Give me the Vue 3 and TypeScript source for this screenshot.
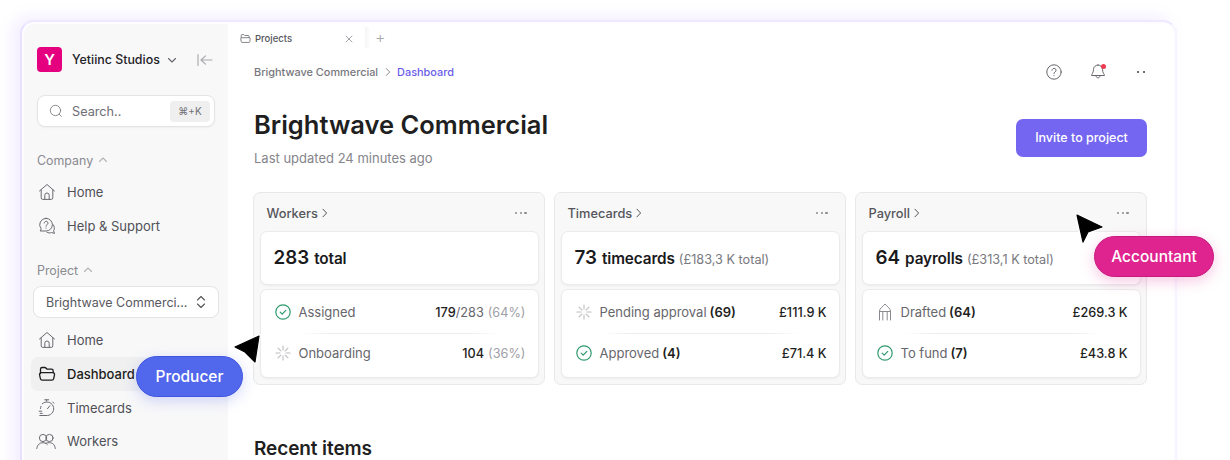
<script setup lang="ts">
type Row = { icon: string; label: string; count?: string; strong: string; soft?: string; muted?: string };
type Card = { title: string; big: string; unit: string; note?: string; rows: Row[] };

const companyNav = [
  { label: "Home", icon: "home" },
  { label: "Help & Support", icon: "help" },
];
const projectNav = [
  { label: "Home", icon: "home", active: false },
  { label: "Dashboard", icon: "folder", active: true },
  { label: "Timecards", icon: "timer", active: false },
  { label: "Workers", icon: "users", active: false },
];
const cards: Card[] = [
  {
    title: "Workers", big: "283", unit: "total",
    rows: [
      { icon: "check", label: "Assigned", strong: "179", soft: "/283", muted: "(64%)" },
      { icon: "spin", label: "Onboarding", strong: "104", muted: "(36%)" },
    ],
  },
  {
    title: "Timecards", big: "73", unit: "timecards", note: "(£183,3 K total)",
    rows: [
      { icon: "spin", label: "Pending approval", count: "(69)", strong: "£111.9 K" },
      { icon: "check", label: "Approved", count: "(4)", strong: "£71.4 K" },
    ],
  },
  {
    title: "Payroll", big: "64", unit: "payrolls", note: "(£313,1 K total)",
    rows: [
      { icon: "draft", label: "Drafted", count: "(64)", strong: "£269.3 K" },
      { icon: "check", label: "To fund", count: "(7)", strong: "£43.8 K" },
    ],
  },
];
const spokes = [0, 45, 90, 135, 180, 225, 270, 315];
</script>

<template>
  <div class="page">
    <div class="frame">
      <div class="window">
        <aside class="sidebar">
          <div class="brand">
            <span class="logo">Y</span>
            <span class="brand-name">Yetiinc Studios</span>
            <svg class="brand-caret" viewBox="0 0 12 12"><path d="M2.500 4.500 6 8l3.500-3.500" /></svg>
            <svg class="collapse" viewBox="0 0 16 14"><path d="M1 1.500v11M15 7H4M8.500 2.800 4 7l4.500 4.200" /></svg>
          </div>
          <div class="search">
            <svg class="search-icon" viewBox="0 0 16 16"><circle cx="7.400" cy="7.400" r="5.900" /><path d="m11.800 11.800 2.400 2.400" /></svg>
            <span class="search-text">Search..</span>
            <span class="kbd">⌘+K</span>
          </div>
          <div class="group-label first">
            <span>Company</span>
            <svg viewBox="0 0 12 12"><path d="M2.500 7.500 6 4l3.500 3.500" /></svg>
          </div>
          <nav class="nav first-nav">
            <div v-for="item in companyNav" :key="item.label" class="nav-item">
              <svg v-if="item.icon === 'home'" class="nav-icon" viewBox="0 0 18 18"><path d="M1.500 8 9 1.500 16.500 8M3.200 6.800v8a1.600 1.600 0 0 0 1.600 1.600h8.400a1.600 1.600 0 0 0 1.600-1.600v-8M6.800 16.400v-4.200a2.200 2.200 0 0 1 4.400 0v4.200" /></svg>
              <svg v-else class="nav-icon" viewBox="0 0 18 18"><path d="M8 1.300a6.400 6.400 0 0 1 6.400 6.400A6.400 6.400 0 0 1 8 14H2.200l1-2.200A6.400 6.400 0 0 1 8 1.300Z" /><path d="M6.200 6a1.900 1.900 0 1 1 2.900 1.700c-.7.400-1.100.8-1.100 1.500M8 11v.2M15.200 7.600c1.400 1.700 1.600 4.300.4 6.200l.9 2.600-3-.9c-1.500.7-3.300.6-4.600-.2" /></svg>
              <span>{{ item.label }}</span>
            </div>
          </nav>
          <div class="group-label second">
            <span>Project</span>
            <svg viewBox="0 0 12 12"><path d="M2.500 7.500 6 4l3.500 3.500" /></svg>
          </div>
          <div class="select">
            <span>Brightwave Commerci...</span>
            <svg viewBox="0 0 12 16"><path d="M2.500 6 6 2.500 9.500 6M2.500 10 6 13.500 9.500 10" /></svg>
          </div>
          <nav class="nav second-nav">
            <div v-for="item in projectNav" :key="item.label" class="nav-item" :class="{ active: item.active }">
              <svg v-if="item.icon === 'home'" class="nav-icon" viewBox="0 0 18 18"><path d="M1.500 8 9 1.500 16.500 8M3.200 6.800v8a1.600 1.600 0 0 0 1.600 1.600h8.400a1.600 1.600 0 0 0 1.600-1.600v-8M6.800 16.400v-4.200a2.200 2.200 0 0 1 4.400 0v4.200" /></svg>
              <svg v-else-if="item.icon === 'folder'" class="nav-icon" viewBox="0 0 18 18"><path d="M2.500 8.500V4.200A1.700 1.700 0 0 1 4.200 2.500h2.600c.6 0 1 .3 1.400.7l.9 1h4.400a1.700 1.700 0 0 1 1.700 1.700v1.600M1.600 9.800a1.800 1.800 0 0 1 1.800-2.200h11.300a1.800 1.800 0 0 1 1.800 2.200l-.8 3.900a1.900 1.900 0 0 1-1.900 1.500H4.300a1.900 1.900 0 0 1-1.900-1.500Z" /></svg>
              <svg v-else-if="item.icon === 'timer'" class="nav-icon" viewBox="0 0 18 18"><path d="M4.200 4.800a6.800 6.800 0 1 1 5.300 11.700H1.800M2.500 9.500A6.800 6.800 0 0 1 3 7.300M1.200 12.200h2.500M2.200 14.400h2M8.500 2V.8M6.700.8h4M14.700 3l1.200 1.200M9.500 9.700l2.400-3" /></svg>
              <svg v-else class="nav-icon wide" viewBox="0 0 20 18"><circle cx="7" cy="6" r="3.600" /><circle cx="13.500" cy="6" r="3.600" /><path d="M.8 16.500c.4-3.800 3-5.800 6.200-5.800 1.800 0 3.300.6 4.300 1.800M9.500 11.400c1-.5 2.400-.8 4-.7 3.200 0 5.400 2 5.800 5.800" /></svg>
              <span>{{ item.label }}</span>
            </div>
          </nav>
        </aside>

        <main class="main">
          <div class="tabs">
            <div class="tab">
              <svg class="tab-folder" viewBox="0 0 14 14"><path d="M1.500 6V3a1 1 0 0 1 1-1h2.300l1.200 1.200h4.500a1 1 0 0 1 1 1V6M1 7a1 1 0 0 1 1-1h10a1 1 0 0 1 1 1l-.6 4.200a1 1 0 0 1-1 .8H2.600a1 1 0 0 1-1-.8Z" /></svg>
              <span class="tab-label">Projects</span>
              <svg class="tab-close" viewBox="0 0 10 10"><path d="m2 2 6 6M8 2 2 8" /></svg>
            </div>
            <span class="tab-edge"></span>
            <span class="tab-add">+</span>
          </div>

          <div class="content">
            <div class="topbar">
              <div class="crumbs">
                <span>Brightwave Commercial</span>
                <svg viewBox="0 0 10 10"><path d="m3.200 1.500 3.500 3.500-3.500 3.500" /></svg>
                <span class="crumb-now">Dashboard</span>
              </div>
              <div class="top-actions">
                <svg class="ic-help" viewBox="0 0 16 16"><circle cx="8" cy="8" r="7.200" /><path d="M6 6.200a2 2 0 1 1 3 1.800c-.7.400-1 .8-1 1.500M8 11.500v.2" /></svg>
                <span class="bell">
                  <svg viewBox="0 0 16 16"><path d="M8 1a4.500 4.500 0 0 1 4.500 4.500c0 3.500 2 4.700 2 6H1.500c0-1.300 2-2.500 2-6A4.500 4.500 0 0 1 8 1ZM6 12c.1 2.600 3.900 2.600 4 0" /></svg>
                  <i></i>
                </span>
                <span class="more-dots"><i></i><i></i></span>
              </div>
            </div>

            <div class="head">
              <div>
                <h1>Brightwave Commercial</h1>
                <p>Last updated 24 minutes ago</p>
              </div>
              <button class="invite" type="button">Invite to project</button>
            </div>

            <section class="cards">
              <article v-for="card in cards" :key="card.title" class="card">
                <header class="card-head">
                  <span class="card-title">{{ card.title }}</span>
                  <svg class="card-arrow" viewBox="0 0 8 10"><path d="m2 1.200 3.600 3.800L2 8.800" /></svg>
                  <span class="ellipsis"><i></i><i></i><i></i></span>
                </header>
                <div class="hero">
                  <strong>{{ card.big }}</strong>
                  <b>{{ card.unit }}</b>
                  <span v-if="card.note">{{ card.note }}</span>
                </div>
                <div class="stats">
                  <div v-for="row in card.rows" :key="row.label" class="stat">
                    <svg v-if="row.icon === 'check'" class="stat-icon check" viewBox="0 0 16 16"><circle cx="8" cy="8" r="7.200" /><path d="m5.200 8.100 2 2 3.600-3.700" /></svg>
                    <svg v-else-if="row.icon === 'spin'" class="stat-icon spin" viewBox="0 0 16 16"><path v-for="a in spokes" :key="a" d="M8 1v4" :transform="`rotate(${a} 8 8)`" /></svg>
                    <svg v-else class="stat-icon draft" viewBox="0 0 14 18"><path d="M1.500 17V8C1.500 5.500 5 3.500 7 1c2 2.500 5.500 4.500 5.500 7v9M1.500 8.500h11M4.800 17V8.500M9.200 17V8.500" /></svg>
                    <span class="stat-label">{{ row.label }}<b v-if="row.count" class="count">{{ row.count }}</b></span>
                    <span class="stat-value"><b>{{ row.strong }}</b><span v-if="row.soft" class="soft">{{ row.soft }}</span><span v-if="row.muted" class="muted">{{ row.muted }}</span></span>
                  </div>
                </div>
              </article>
            </section>

            <h2>Recent items</h2>
          </div>
        </main>
      </div>
    </div>

    <svg class="cursor cursor-left" viewBox="0 0 28 32"><path class="halo" d="M2 14 26 3l-4 26-10-10Z" /><path class="ink" d="M2 14 26 3l-4 26-10-10Z" /></svg>
    <span class="pill producer">Producer</span>
    <svg class="cursor cursor-right" viewBox="0 0 30 32"><path class="halo" d="m2 3 25 12-14 5-5 10Z" /><path class="ink" d="m2 3 25 12-14 5-5 10Z" /></svg>
    <span class="pill accountant">Accountant</span>
  </div>
</template>

<style>
html, body { margin: 0; background: #fff; }
</style>

<style scoped>
* { box-sizing: border-box; }
.page {
  position: relative;
  width: 1230px;
  height: 460px;
  overflow: hidden;
  padding: 20px 0 0 20px;
  background: #fff;
  font-family: Inter, "Liberation Sans", sans-serif;
  color: #1f1f22;
}
svg { fill: none; stroke: currentColor; stroke-linecap: round; stroke-linejoin: round; flex: none; }
.frame {
  width: 1157px;
  height: 470px;
  padding: 2px;
  border: 2px solid;
  border-color: #efe9ff #f8f4ff #f8f4ff #e9e1ff;
  border-radius: 14px 14px 0 0;
  background: #fdfdff;
  box-shadow: -7px -3px 18px #f2edff;
}
.window {
  display: flex;
  width: 1149px;
  height: 460px;
  border-radius: 10px 10px 0 0;
  background: #fff;
  overflow: hidden;
}
.sidebar {
  width: 204px;
  flex: none;
  padding: 23px 13px 0;
  background: #f8f8f9;
}
.brand { display: flex; align-items: center; height: 25px; }
.logo {
  width: 25px; height: 25px; border-radius: 4px; background: #e4007f; color: #fff;
  display: flex; align-items: center; justify-content: center; font-size: 15px; font-weight: 600;
}
.brand-name { margin-left: 10px; font-size: 12.400px; font-weight: 500; color: #232327; white-space: nowrap; }
.brand-caret { width: 12px; height: 12px; margin-left: 6px; stroke-width: 1.100; color: #66666c; }
.collapse { width: 16px; height: 14px; margin-left: auto; margin-right: 2px; color: #a8a8ae; stroke-width: 1.100; }
.search {
  display: flex; align-items: center; height: 32px; margin-top: 23px; padding: 0 4px 0 11px; width: 178px;
  background: #fff; border: 1px solid #e4e4e7; border-radius: 8px; box-shadow: 0 1px 2px #0000000a;
}
.search-icon { width: 14px; height: 14px; color: #85858b; stroke-width: 1.100; }
.search-text { margin-left: 9px; font-size: 12.700px; color: #6e6e74; }
.kbd {
  margin-left: auto; width: 40px; height: 21px; border-radius: 4px; background: #efeff0; color: #6f6f75;
  font-size: 10px; display: flex; align-items: center; justify-content: center;
}
.group-label { display: flex; align-items: center; height: 18px; font-size: 12.400px; color: #8a8a90; }
.group-label svg { width: 12px; height: 12px; margin-left: 4px; stroke-width: 1.100; color: #b4b4b9; }
.group-label.first { margin-top: 24px; }
.group-label.second { margin-top: 19px; }
.nav-item {
  display: flex; align-items: center; height: 33.700px; margin: 0 0 0 -6px; padding-left: 7px; gap: 11px;
  font-size: 13px; color: #505056; border-radius: 7px; width: 119px; white-space: nowrap;
}
.nav-item .nav-icon { width: 18px; height: 18px; stroke-width: 1; color: #6a6a70; }
.nav-item .nav-icon.wide { width: 20px; margin-left: -2px; }
.nav-item.active { background: #f0f0f1; color: #1d1d20; font-weight: 500; }
.nav-item.active .nav-icon { color: #1d1d20; stroke-width: 1.300; }
.first-nav { margin-top: 6px; }
.second-nav { margin-top: 5px; }
.select {
  display: flex; align-items: center; justify-content: space-between; width: 186px; height: 32px;
  margin: 7px 0 0 -4px; padding: 0 11px 0 12px; background: #fff; border: 1px solid #e4e4e7; border-radius: 8px;
  font-size: 12.500px; color: #58585e;
}
.select svg { width: 12px; height: 16px; stroke-width: 1.100; color: #55555b; }
.main { flex: 1; min-width: 0; display: flex; flex-direction: column; }
.tabs { display: flex; align-items: flex-end; height: 24px; }
.tab {
  display: flex; align-items: center; width: 137px; height: 24px; padding: 5px 11px 0 12px;
  background: #fff; color: #55555b;
}
.tab-folder { width: 11px; height: 11px; stroke-width: 1; color: #66666c; }
.tab-label { margin-left: 4px; font-size: 9.500px; font-weight: 500; }
.tab-close { width: 10px; height: 10px; margin-left: auto; color: #a2a2a8; stroke-width: 1; }
.tab-edge { width: 5px; height: 21px; background: linear-gradient(90deg, #f5f5f6, #fdfdfd); }
.tab-add { align-self: center; margin-left: 5px; margin-top: 1px; color: #a9a9ae; font-size: 16px; font-weight: 300; line-height: 1; }
.content { padding: 0 26px 0 26px; }
.topbar { display: flex; align-items: center; justify-content: space-between; height: 28px; margin-top: 10px; }
.crumbs { display: flex; align-items: center; font-size: 10.900px; font-weight: 500; color: #77777d; }
.crumbs svg { width: 10px; height: 10px; margin: 0 4px 0 5px; stroke-width: 1; color: #8a8a90; }
.crumb-now { color: #6a5be8; }
.top-actions { display: flex; align-items: center; color: #66666c; }
.ic-help { width: 16px; height: 16px; stroke-width: 1; }
.bell { position: relative; display: flex; margin-left: 28px; }
.bell svg { width: 16px; height: 16px; stroke-width: 1; }
.bell i { position: absolute; top: 0; right: 0; width: 5px; height: 5px; border-radius: 50%; background: #ee3b4e; }
.more-dots { display: flex; gap: 3.500px; margin-left: 31px; margin-right: 2px; }
.more-dots i { width: 2.500px; height: 2.500px; border-radius: 50%; background: #3c3c42; }
.head { display: flex; align-items: center; justify-content: space-between; margin-top: 22px; }
h1 { margin: 0; font-size: 25.500px; line-height: 34px; font-weight: 600; color: #1f1f22; white-space: nowrap; }
.head p { margin: 7px 0 0; font-size: 13px; line-height: 18px; color: #85858b; }
.invite {
  width: 131px; height: 38px; border: 0; border-radius: 7px; background: #7466f0; color: #fff;
  font: 500 12.500px Inter, "Liberation Sans", sans-serif;
}
.cards { display: grid; grid-template-columns: repeat(3, 292px); column-gap: 9px; margin: 25px 0 0 -1px; }
.card {
  height: 193px; padding: 0 5.500px 6px; background: #f8f8f8; border: 1px solid #e8e8ea; border-radius: 7px;
}
.card-head { display: flex; align-items: center; height: 38px; padding: 2px 12px 0 7px; color: #55555b; }
.card-title { font-size: 12.800px; font-weight: 500; }
.card-arrow { width: 8px; height: 10px; margin-left: 3px; stroke-width: 1; }
.ellipsis { display: flex; gap: 2.500px; margin-left: auto; }
.ellipsis i { width: 2.200px; height: 2.200px; border-radius: 50%; background: #8b8b91; }
.hero {
  display: flex; align-items: baseline; height: 54px; padding: 14px 13px 0; background: #fff;
  border: 1px solid #ebebed; border-radius: 7px; box-shadow: 0 1px 2px #0000000d; color: #1a1a1d; white-space: nowrap;
}
.hero strong { font-size: 18.800px; font-weight: 600; line-height: 24px; }
.hero b { margin-left: 5px; font-size: 15.300px; font-weight: 600; letter-spacing: -0.100px; }
.hero span { margin-left: 4px; font-size: 12.700px; color: #78787e; }
.stats {
  height: 89px; margin-top: 4px; padding: 1.500px 12px 0 13px; background: #fff; border: 1px solid #ebebed; border-radius: 7px;
  box-shadow: 0 1px 2px #0000000d;
}
.stat { display: flex; align-items: center; height: 41px; font-size: 13px; color: #66666c; }
.stat + .stat { position: relative; }
.stat + .stat::before {
  content: ""; position: absolute; top: 0; left: 28px; right: 28px; height: 1px;
  background: linear-gradient(90deg, #f0f0f100, #ececee 15%, #ececee 85%, #f0f0f100);
}
.stat-icon { width: 16px; height: 16px; margin-left: 1px; }
.check { color: #2f9a6d; stroke-width: 1.200; }
.spin { color: #bdbdc2; stroke-width: 1.100; }
.draft { color: #8a8a90; stroke-width: 1; height: 18px; }
.stat-label { margin-left: 8px; white-space: nowrap; }
.stat-label b, .stat-value b { color: #1f1f22; font-weight: 600; }
.count { margin-left: 3px; }
.stat-value { margin-left: auto; white-space: nowrap; font-size: 12.700px; }
.stat-value b { font-weight: 500; }
.soft { color: #66666c; }
.muted { margin-left: 4px; color: #a0a0a6; }
h2 { margin: 51px 0 0; font-size: 19px; line-height: 26px; font-weight: 600; color: #1f1f22; letter-spacing: -0.100px; }
.pill {
  position: absolute; display: flex; align-items: center; justify-content: center; border-radius: 21px;
  color: #fff; font-size: 15.500px; font-weight: 500; height: 41px; z-index: 2;
}
.producer {
  left: 136px; top: 356px; width: 107px; background: #5268ec; border: 1px solid #3f55e0; box-shadow: 0 4px 14px #5268ec40;
}
.accountant {
  left: 1094px; top: 236px; width: 120px; background: #e0248f; border: 1px solid #c71a7d; box-shadow: 0 4px 14px #e0248f40;
}
.cursor { position: absolute; z-index: 3; overflow: visible; }
.cursor .halo { fill: #fff; stroke: #fff; stroke-width: 3.500; }
.cursor .ink { fill: #000; stroke: #000; stroke-width: 1.200; }
.cursor-left { left: 233px; top: 333px; width: 28px; height: 32px; }
.cursor-right { left: 1075px; top: 212px; width: 30px; height: 32px; }
</style>
